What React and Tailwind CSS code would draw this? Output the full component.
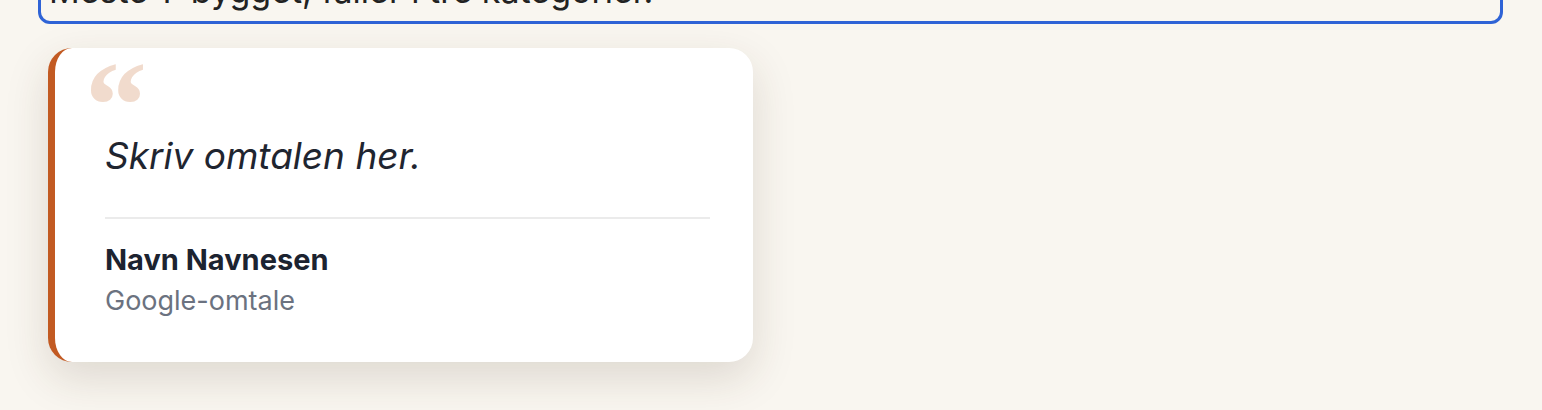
export default function App() {
  return (
    <div className="min-h-screen w-full bg-[#f9f6f0] px-[38px] font-['Inter',sans-serif] overflow-hidden">
      {/* editor field, scrolled mostly out of view */}
      <div className="-mt-[44px] w-[1465px] rounded-[12px] border-[3px] border-[#2f63d6] bg-[#f9f6f0] px-[8px] pt-[12px] pb-[10px] text-[34px] leading-[40px] text-[#222222]">
        Meste 1: bygget, faller i tre kategorier.
      </div>

      <div className="relative ml-[10px] mt-[24px] w-[705px] rounded-[24px] border-l-[7px] border-[#c25a22] bg-white pl-[50px] pr-[43px] pt-[82px] pb-[43px] shadow-[0_16px_44px_rgba(70,50,30,0.15)]">
        <span
          aria-hidden="true"
          className="absolute left-[30px] -top-[4px] block h-[70px] overflow-hidden select-none font-['Liberation_Serif',serif] text-[124px] font-bold leading-none text-[#f1dbcd]"
        >
          &ldquo;
        </span>
        <p className="text-[37px] italic leading-[52px] text-[#1f2530]">Skriv omtalen her.</p>
        <div className="mt-[35px] h-[2px] bg-[#ebebeb]" />
        <div className="pt-[22px]">
          <p className="text-[29px] font-bold leading-[38px] text-[#1c2330]">Navn Navnesen</p>
          <p className="mt-[4px] text-[27px] leading-[36px] text-[#6b7280]">Google-omtale</p>
        </div>
      </div>
    </div>
  );
}
